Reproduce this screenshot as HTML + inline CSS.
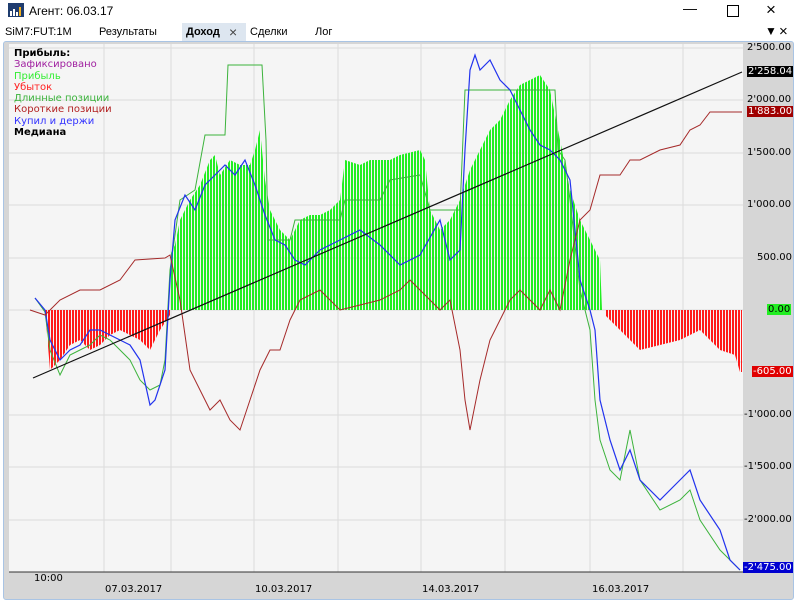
<!DOCTYPE html><html><head><meta charset="utf-8"><style>
body{margin:0;width:795px;height:600px;background:#fff;font-family:"Liberation Sans","DejaVu Sans",sans-serif;overflow:hidden;position:relative}
.t{position:absolute;font-size:11px;color:#000;white-space:nowrap}
</style></head><body>
<div style="position:absolute;left:0;top:0;width:795px;height:22px;background:#fff"></div>
<svg style="position:absolute;left:8px;top:3px" width="16" height="14"><rect width="16" height="14" fill="#1f3c6e"/><rect x="2" y="8" width="2" height="5" fill="#fff"/><rect x="5" y="6" width="2" height="7" fill="#fff"/><rect x="8" y="9" width="2" height="4" fill="#fff"/><rect x="11" y="4" width="2" height="9" fill="#f2b01e"/></svg>
<div class="t" style="left:29px;top:4px;font-size:12px">Агент: 06.03.17</div>
<div class="t" style="left:683px;top:0px;font-size:14px">&#8212;</div>
<div style="position:absolute;left:727px;top:5px;width:10px;height:10px;border:1px solid #000"></div>
<div class="t" style="left:766px;top:0px;font-size:17px">&#215;</div>
<div class="t" style="left:5px;top:26px">SiM7:FUT:1M</div>
<div class="t" style="left:99px;top:26px">Результаты</div>
<div style="position:absolute;left:182px;top:23px;width:64px;height:18px;background:#dde6f0"></div>
<div class="t" style="left:186px;top:26px;font-weight:bold">Доход</div>
<div class="t" style="left:229px;top:24px;font-size:14px;color:#444">&#215;</div>
<div class="t" style="left:250px;top:26px">Сделки</div>
<div class="t" style="left:315px;top:26px">Лог</div>
<div class="t" style="left:765px;top:24px;font-size:12px">&#9660;</div>
<div class="t" style="left:779px;top:23px;font-size:15px">&#215;</div>
<div style="position:absolute;left:3px;top:41px;width:789px;height:557px;border:1px solid #a9c4e4;border-radius:3px;background:#d6d6d6"></div>
<svg style="position:absolute;left:0;top:0" width="795" height="600">
<defs><pattern id="g" width="3" height="10" patternUnits="userSpaceOnUse"><rect width="2" height="10" fill="#22ee22"/></pattern><pattern id="r" width="3" height="10" patternUnits="userSpaceOnUse"><rect width="2" height="10" fill="#ff1a1a"/></pattern></defs>
<rect x="9" y="44" width="734" height="528" fill="#f5f5f5"/>
<g stroke="#dcdcdc" stroke-width="1">
<line x1="104" y1="44" x2="104" y2="572"/><line x1="171" y1="44" x2="171" y2="572"/><line x1="254" y1="44" x2="254" y2="572"/><line x1="338" y1="44" x2="338" y2="572"/><line x1="421" y1="44" x2="421" y2="572"/><line x1="505" y1="44" x2="505" y2="572"/><line x1="590" y1="44" x2="590" y2="572"/><line x1="683" y1="44" x2="683" y2="572"/>
<line x1="9" y1="48" x2="743" y2="48"/><line x1="9" y1="100" x2="743" y2="100"/><line x1="9" y1="153" x2="743" y2="153"/><line x1="9" y1="205" x2="743" y2="205"/><line x1="9" y1="258" x2="743" y2="258"/><line x1="9" y1="310" x2="743" y2="310"/><line x1="9" y1="362" x2="743" y2="362"/><line x1="9" y1="415" x2="743" y2="415"/><line x1="9" y1="467" x2="743" y2="467"/><line x1="9" y1="520" x2="743" y2="520"/>
</g>
<polygon fill="url(#g)" points="170,310 170,255 175,245 180,220 190,200 200,185 210,160 215,155 220,175 230,160 240,165 250,165 255,150 260,130 265,180 270,210 280,230 290,240 300,220 310,215 320,215 330,210 340,200 345,160 360,165 370,160 390,160 400,155 420,150 425,160 430,210 440,230 450,220 460,200 465,185 470,170 480,150 490,130 500,120 510,100 520,85 530,80 540,75 550,90 560,140 570,190 580,220 590,240 600,260 602,310"/>
<polygon fill="url(#r)" points="45,310 50,370 60,360 70,345 80,340 90,350 100,345 110,335 120,330 140,340 150,350 160,330 170,315 170,310"/>
<polygon fill="url(#r)" points="605,310 605,315 620,330 640,350 660,345 680,340 700,330 720,350 735,355 740,372 742,372 742,310"/>
<polyline fill="none" stroke="#3cb33c" stroke-width="1" points="35,298 45,312 50,350 60,375 70,355 80,350 90,345 100,335 110,340 120,350 130,360 140,380 150,390 160,385 165,360 170,270 180,200 195,190 205,135 225,135 228,65 262,65 266,140 268,240 290,240 295,220 340,220 345,200 380,200 390,180 420,175 430,210 460,210 465,90 555,90 558,150 565,160 570,200 580,290 590,330 595,400 600,440 610,470 620,480 630,430 640,480 660,510 680,500 690,490 700,520 720,550 730,560 740,570"/>
<polyline fill="none" stroke="#2233ee" stroke-width="1.2" points="35,298 45,310 50,340 60,360 70,350 80,345 90,330 100,330 110,335 120,340 130,345 140,360 150,405 155,400 165,370 170,280 175,220 185,195 195,210 205,185 215,175 225,165 235,175 245,160 255,185 265,215 275,240 285,245 295,260 305,265 320,250 340,240 360,230 380,245 400,265 420,255 440,220 450,260 460,250 465,150 470,70 475,55 480,70 490,60 500,80 510,90 520,110 530,130 540,145 550,150 560,160 570,180 580,280 590,310 595,330 600,400 610,440 620,470 630,450 640,480 660,500 680,480 690,470 700,500 720,530 730,560 740,570"/>
<polyline fill="none" stroke="#a52a2a" stroke-width="1" points="30,310 45,315 60,300 80,290 100,290 120,280 135,260 165,258 170,255 180,300 190,370 200,390 210,410 220,400 230,420 240,430 250,400 260,370 270,350 280,350 290,320 300,300 320,290 340,310 360,305 380,300 400,290 410,280 420,290 430,300 440,310 450,300 460,350 465,400 470,430 480,380 490,340 500,320 510,300 520,290 530,300 540,310 550,290 560,310 570,260 580,220 590,210 600,175 620,175 630,160 640,160 660,150 680,145 690,130 700,125 710,112 742,112"/>
<line x1="33" y1="378" x2="742" y2="72" stroke="#111" stroke-width="1.2"/>
<line x1="9" y1="572" x2="743" y2="572" stroke="#333" stroke-width="1"/>
</svg>
<div class="t" style="left:14px;top:48px;font-size:10px;line-height:11.3px;font-family:'DejaVu Sans',sans-serif">
<b>Прибыль:</b><br><span style="color:#a020a0">Зафиксировано</span><br><span style="color:#33ee33">Прибыль</span><br><span style="color:#ff2020">Убыток</span><br><span style="color:#3cb33c">Длинные позиции</span><br><span style="color:#b22222">Короткие позиции</span><br><span style="color:#3333ff">Купил и держи</span><br><b>Медиана</b></div>
<div style="font-family:'DejaVu Sans',sans-serif;font-size:10px">
<div class="t" style="left:747px;top:42px;font-size:10px">2'500.00</div>
<div class="t" style="left:747px;top:66px;font-size:10px;background:#000;color:#fff;padding:0 1px">2'258.04</div>
<div class="t" style="left:747px;top:94px;font-size:10px">2'000.00</div>
<div class="t" style="left:747px;top:106px;font-size:10px;background:#a00000;color:#fff;padding:0 1px">1'883.00</div>
<div class="t" style="left:747px;top:147px;font-size:10px">1'500.00</div>
<div class="t" style="left:747px;top:199px;font-size:10px">1'000.00</div>
<div class="t" style="left:757px;top:252px;font-size:10px">500.00</div>
<div class="t" style="left:767px;top:304px;font-size:10px;background:#22ee22;color:#000;padding:0 1px">0.00</div>
<div class="t" style="left:752px;top:366px;font-size:10px;background:#e00000;color:#fff;padding:0 1px">-605.00</div>
<div class="t" style="left:744px;top:409px;font-size:10px">-1'000.00</div>
<div class="t" style="left:744px;top:461px;font-size:10px">-1'500.00</div>
<div class="t" style="left:744px;top:514px;font-size:10px">-2'000.00</div>
<div class="t" style="left:743px;top:562px;font-size:10px;background:#0000d0;color:#fff;padding:0 1px">-2'475.00</div>
<div class="t" style="left:34px;top:573px;font-size:10px">10:00</div>
<div class="t" style="left:105px;top:584px;font-size:10px">07.03.2017</div>
<div class="t" style="left:255px;top:584px;font-size:10px">10.03.2017</div>
<div class="t" style="left:422px;top:584px;font-size:10px">14.03.2017</div>
<div class="t" style="left:592px;top:584px;font-size:10px">16.03.2017</div>
</div>
</body></html>
